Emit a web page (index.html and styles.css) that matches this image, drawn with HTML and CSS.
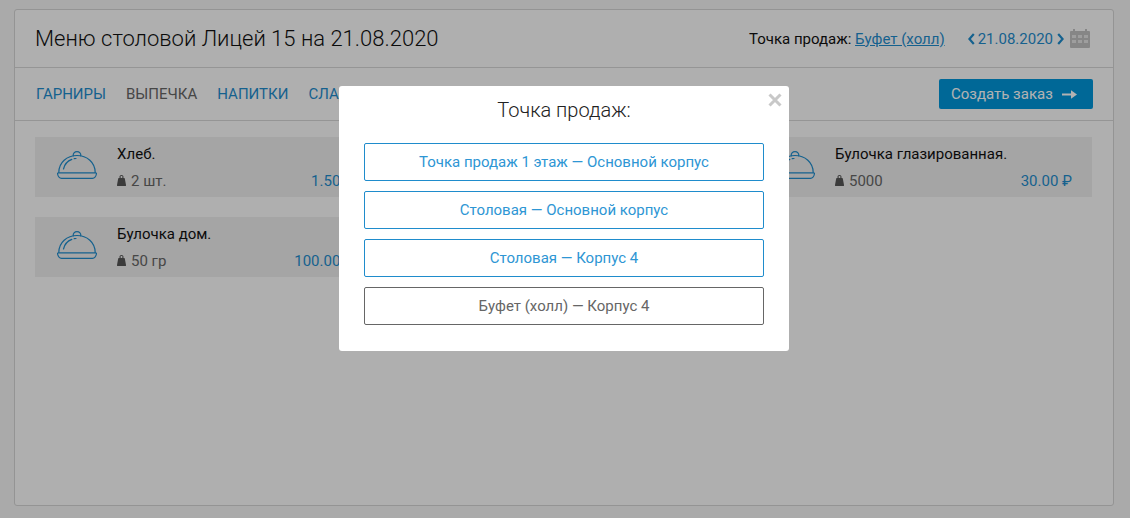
FILE: index.html
```html
<!DOCTYPE html>
<html lang="ru">
<head>
<meta charset="utf-8">
<title>Меню столовой</title>
<link rel="stylesheet" href="styles.css">
</head>
<body>
<svg class="sprite" width="0" height="0" aria-hidden="true">
  <symbol id="cloche" viewBox="0 0 40 28">
    <g fill="none" stroke="currentColor" stroke-width="1.200" stroke-linejoin="round" stroke-linecap="round">
      <path d="M1.800 21.500C1.800 11.500 10 4.500 20 4.500s18.200 7 18.200 17"/>
      <path d="M16.300 4.800C15.800 2.600 17.600.7 20 .7s4.200 1.900 3.700 4.100"/>
      <path d="M1.500 21.800H38.500C39.200 21.800 39.600 22.300 39.400 23C38.900 25.600 37.500 27.300 35.500 27.300H4.500C2.500 27.300 1.100 25.600.6 23C.4 22.300.8 21.800 1.500 21.800Z"/>
      <path d="M6.500 18C7.500 13.500 10.500 10 14.800 8.400"/>
      <path d="M17.200 7.700L19 7.500"/>
    </g>
  </symbol>
  <symbol id="weight" viewBox="0 0 9 11">
    <path fill="currentColor" fill-rule="evenodd" d="M4.500 0C5.800 0 6.700 1 6.500 2.400L6.300 3.100H7.200C7.500 3.100 7.700 3.300 7.800 3.600L9 10.100C9.100 10.600 8.800 11 8.300 11H.7C.2 11-.1 10.600 0 10.100L1.200 3.600C1.300 3.300 1.500 3.100 1.800 3.100H2.700L2.500 2.400C2.300 1 3.200 0 4.500 0ZM4.500 1C3.900 1 3.500 1.400 3.500 2S3.900 3 4.500 3 5.500 2.600 5.500 2 5.100 1 4.500 1Z"/>
  </symbol>
</svg>

<main class="panel">
  <header class="head">
    <h1 class="title">Меню столовой Лицей 15 на 21.08.2020</h1>
    <div class="head-tools">
      <span class="point">Точка продаж: <a class="point-link" href="#">Буфет (холл)</a></span>
      <div class="date">
        <svg class="chev" viewBox="0 0 7 12" aria-hidden="true"><path d="M5.800 1L1.400 6l4.400 5"/></svg>
        <span>21.08.2020</span>
        <svg class="chev chev-next" viewBox="0 0 7 12" aria-hidden="true"><path d="M1.200 1l4.400 5-4.400 5"/></svg>
      </div>
      <svg class="cal" viewBox="0 0 20 19" aria-hidden="true">
        <rect class="cal-cells" x="1" y="5" width="18" height="10"/>
        <path fill="currentColor" fill-rule="evenodd" d="M3 0h2v2h10V0h2v2h2a1 1 0 0 1 1 1v15a1 1 0 0 1-1 1H1a1 1 0 0 1-1-1V3a1 1 0 0 1 1-1h2ZM2 6v3h4V6Zm6 0v3h4V6Zm6 0v3h4V6ZM2 11v3h4v-3Zm6 0v3h4v-3Zm6 0v3h4v-3Z"/>
      </svg>
    </div>
  </header>

  <nav class="tabs">
    <ul class="tab-list">
      <li><a class="tab" href="#">Гарниры</a></li>
      <li><a class="tab tab-active" href="#">Выпечка</a></li>
      <li><a class="tab" href="#">Напитки</a></li>
      <li><a class="tab" href="#">Сладкое</a></li>
    </ul>
    <a class="order" href="#">Создать заказ
      <svg class="order-arrow" viewBox="0 0 15 9" aria-hidden="true"><path d="M0 4.500h10" stroke="currentColor" stroke-width="2"/><path fill="currentColor" d="M9 .3 15 4.500 9 8.700Z"/></svg>
    </a>
  </nav>

  <section class="grid">
    <article class="item">
      <svg class="dish"><use href="#cloche"/></svg>
      <div class="info">
        <div class="name">Хлеб.</div>
        <div class="meta">
          <span class="qty"><svg class="weight"><use href="#weight"/></svg>2 шт.</span>
          <span class="price">1.50 ₽</span>
        </div>
      </div>
    </article>
    <article class="item item-hidden" aria-hidden="true"></article>
    <article class="item">
      <svg class="dish"><use href="#cloche"/></svg>
      <div class="info">
        <div class="name">Булочка глазированная.</div>
        <div class="meta">
          <span class="qty"><svg class="weight"><use href="#weight"/></svg>5000</span>
          <span class="price">30.00 ₽</span>
        </div>
      </div>
    </article>
    <article class="item">
      <svg class="dish"><use href="#cloche"/></svg>
      <div class="info">
        <div class="name">Булочка дом.</div>
        <div class="meta">
          <span class="qty"><svg class="weight"><use href="#weight"/></svg>50 гр</span>
          <span class="price">100.00 ₽</span>
        </div>
      </div>
    </article>
  </section>
</main>

<div class="overlay">
  <div class="modal">
    <button class="close" type="button" aria-label="Закрыть">
      <svg viewBox="0 0 12 12" aria-hidden="true"><path d="M1.300 1.300l9.400 9.400M10.700 1.300l-9.400 9.400"/></svg>
    </button>
    <h2 class="modal-title">Точка продаж:</h2>
    <div class="choices">
      <a class="choice" href="#">Точка продаж 1 этаж — Основной корпус</a>
      <a class="choice" href="#">Столовая — Основной корпус</a>
      <a class="choice" href="#">Столовая — Корпус 4</a>
      <a class="choice choice-current" href="#">Буфет (холл) — Корпус 4</a>
    </div>
  </div>
</div>
</body>
</html>
```
FILE: styles.css
```css
* { box-sizing: border-box; }
html, body { height: 100%; }
body {
  margin: 0;
  padding: 9px 16px 12px 14px;
  background: #f4f4f4;
  font-family: Roboto, "Liberation Sans", sans-serif;
  font-size: 15px;
  color: #111;
  overflow: hidden;
}
a { text-decoration: none; }
.sprite { position: absolute; }

.panel {
  height: 497px;
  background: #fbfbfb;
  border: 1px solid #d4d4d4;
  border-radius: 3px;
}

.head {
  height: 58px;
  display: flex;
  align-items: center;
  justify-content: space-between;
  padding: 0 23px 0 20px;
  border-bottom: 1px solid #d6d6d6;
}
.title {
  margin: 0;
  font-size: 22px;
  font-weight: 300;
  color: #111;
}
.head-tools { display: flex; align-items: center; }
.point { font-size: 15px; }
.point-link { color: #1f8ccc; text-decoration: underline; }
.date {
  display: flex;
  align-items: center;
  gap: 3px;
  margin-left: 23px;
  color: #1f8ccc;
}
.chev {
  width: 7px;
  height: 12px;
  fill: none;
  stroke: currentColor;
  stroke-width: 2.200;
}
.chev-next { margin-left: 1px; }
.cal { width: 20px; height: 19px; margin-left: 6px; color: #c0c0c0; }
.cal-cells { fill: #e2e2e2; }

.tabs {
  height: 53px;
  display: flex;
  align-items: center;
  justify-content: space-between;
  padding: 0 20px 0 21px;
  border-bottom: 1px solid #d6d6d6;
}
.tab-list { display: flex; gap: 20px; margin: 0; padding: 0; list-style: none; }
.tab { color: #1f8ccc; text-transform: uppercase; font-size: 15px; }
.tab-active { color: #666; }
.order {
  display: flex;
  align-items: center;
  gap: 9px;
  width: 154px;
  height: 30px;
  padding-left: 12px;
  background: #0095d9;
  border-radius: 2px;
  color: #fff;
  font-size: 15px;
}
.order-arrow { width: 15px; height: 9px; }

.grid {
  display: grid;
  grid-template-columns: repeat(3, 339px);
  grid-auto-rows: 60px;
  gap: 20px;
  padding: 16px 20px;
}
.item {
  display: flex;
  align-items: center;
  padding: 0 20px 0 22px;
  background: #ececec;
}
.dish { width: 40px; height: 28px; flex: none; color: #1f8ccc; margin: 0 20px 5px 0; }
.info { flex: 1; display: flex; flex-direction: column; gap: 9px; }
.name { font-size: 15px; line-height: 18px; color: #111; }
.meta { display: flex; justify-content: space-between; align-items: center; line-height: 18px; }
.qty { color: #666; font-size: 15px; display: flex; align-items: center; }
.weight { width: 9px; height: 11px; margin-right: 5px; color: #555; }
.price { color: #1f8ccc; font-size: 15px; }

.overlay {
  position: fixed;
  inset: 0;
  display: flex;
  justify-content: center;
  align-items: flex-start;
  padding: 86px 2px 0 0;
  background: rgba(0, 0, 0, .3);
}
.modal {
  position: relative;
  width: 450px;
  height: 265px;
  padding: 12px 25px 0;
  background: #fff;
  border-radius: 3px;
}
.close {
  position: absolute;
  top: 7px;
  right: 7px;
  width: 14px;
  height: 14px;
  padding: 0;
  border: 0;
  background: none;
}
.close svg { display: block; fill: none; stroke: #c8c8c8; stroke-width: 2.600; }
.modal-title {
  margin: 0 0 21px;
  height: 24px;
  line-height: 24px;
  text-align: center;
  font-size: 20px;
  font-weight: 300;
  color: #222;
}
.choices { display: flex; flex-direction: column; gap: 10px; }
.choice {
  display: flex;
  align-items: center;
  justify-content: center;
  height: 38px;
  border: 1px solid #1f8ccc;
  border-radius: 2px;
  color: #2e96d4;
  font-size: 15px;
}
.choice-current { border-color: #666; color: #666; }
```
